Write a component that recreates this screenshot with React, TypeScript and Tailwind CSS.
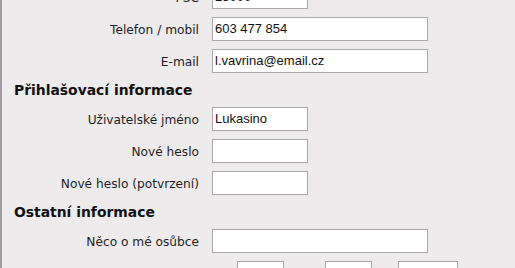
import React from "react";

const labelFont = { fontFamily: '"DejaVu Sans", Verdana, sans-serif' };

function Row({ label, value, wide }: { label: string; value?: string; wide?: boolean }) {
  return (
    <div className="flex items-center h-6">
      <div className="w-[197px] text-right text-[12.2px] text-[#1e1e1e] leading-none pt-[2px] font-['DejaVu_Sans',sans-serif]">
        {label}
      </div>
      <div
        className={`ml-[13px] h-6 ${wide ? "w-[216px]" : "w-[96px]"} bg-white border border-[#a9a9a9] flex items-center pl-[2px] text-[13px] text-[#111] font-['Liberation_Sans',Arial,sans-serif]`}
      >
        {value}
      </div>
    </div>
  );
}

function Heading({ children }: { children: React.ReactNode }) {
  return (
    <div className="h-[18px] flex items-center pl-[12px] text-[13.9px] font-bold text-[#111] font-['DejaVu_Sans',sans-serif]">
      {children}
    </div>
  );
}

export default function App() {
  return (
    <div className="w-[515px] h-[268px] overflow-hidden bg-[#edebec] border-l-2 border-[#a49da6]" style={labelFont}>
      <div className="flex flex-col gap-2 mt-[-15px]">
        <Row label="PSČ" value="28000" />
        <Row label="Telefon / mobil" value="603 477 854" wide />
        <Row label="E-mail" value="l.vavrina@email.cz" wide />
        <Heading>Přihlašovací informace</Heading>
        <Row label="Uživatelské jméno" value="Lukasino" />
        <Row label="Nové heslo" />
        <Row label="Nové heslo (potvrzení)" />
        <Heading>Ostatní informace</Heading>
        <Row label="Něco o mé osůbce" wide />
        <div className="flex h-6">
          <div className="w-[197px]" />
          <div className="ml-[13px] flex pl-[25px]">
            <div className="w-[47px] h-6 bg-white border border-[#a9a9a9]" />
            <div className="ml-[41px] w-[47px] h-6 bg-white border border-[#a9a9a9]" />
            <div className="ml-[26px] w-[60px] h-6 bg-white border border-[#a9a9a9]" />
          </div>
        </div>
      </div>
    </div>
  );
}
